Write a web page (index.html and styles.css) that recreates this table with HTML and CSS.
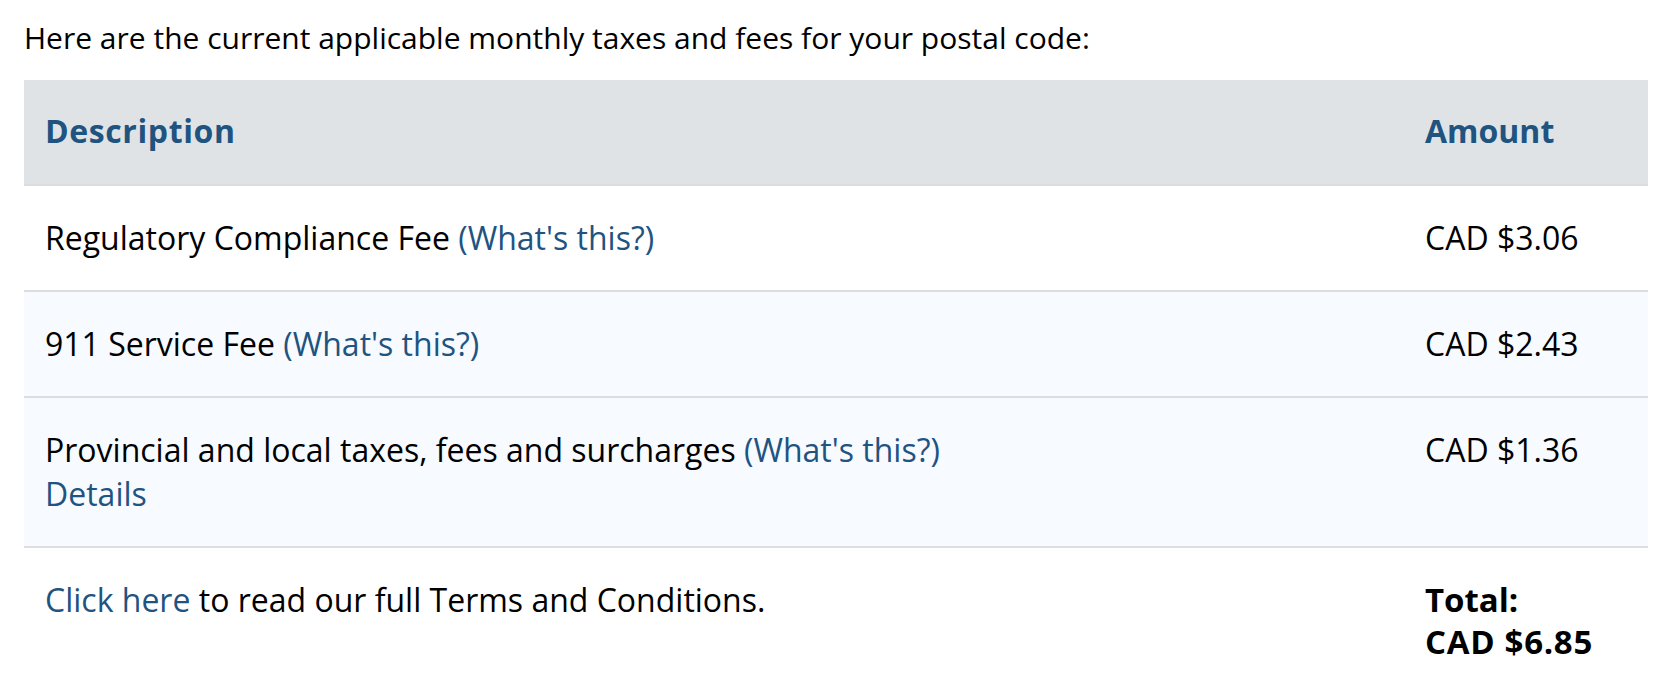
FILE: index.html
```html
<!DOCTYPE html>
<html lang="en">
<head>
<meta charset="utf-8">
<title>Taxes and fees</title>
<link rel="stylesheet" href="styles.css">
</head>
<body>
<div class="page">
  <p class="intro">Here are the current applicable monthly taxes and fees for your postal code:</p>
  <table class="fees">
    <thead>
      <tr>
        <th class="desc">Description</th>
        <th class="amt">Amount</th>
      </tr>
    </thead>
    <tbody>
      <tr>
        <td class="desc">Regulatory Compliance Fee <a href="#">(What's this?)</a></td>
        <td class="amt">CAD $3.06</td>
      </tr>
      <tr class="alt">
        <td class="desc">911 Service Fee <a href="#">(What's this?)</a></td>
        <td class="amt">CAD $2.43</td>
      </tr>
      <tr class="alt">
        <td class="desc">Provincial and local taxes, fees and surcharges <a href="#">(What's this?)</a><br><a href="#">Details</a></td>
        <td class="amt">CAD $1.36</td>
      </tr>
      <tr class="foot">
        <td class="desc"><a href="#">Click here</a> to read our full Terms and Conditions.</td>
        <td class="amt total">Total:<br><span class="total-value">CAD $6.85</span></td>
      </tr>
    </tbody>
  </table>
</div>
</body>
</html>
```

FILE: styles.css
```css
html, body {
  margin: 0;
  padding: 0;
  background: #ffffff;
}

body {
  font-family: "Open Sans", "Liberation Sans", sans-serif;
  color: #000000;
}

.page {
  padding: 17px 22px 0 24px;
}

.intro {
  margin: 0 0 21px 0;
  font-size: 30px;
  line-height: 42px;
}

a {
  color: #1f5481;
  text-decoration: none;
}

.fees {
  width: 100%;
  border-collapse: collapse;
  font-size: 32px;
  line-height: 44px;
}

.fees th {
  background: #e0e3e6;
  color: #1f5481;
  font-weight: 700;
  text-align: left;
  padding: 29px 21px 31px 21px;
  border-bottom: 2px solid #dcdde0;
}

.fees th.desc {
  letter-spacing: 0.6px;
}

.fees td {
  text-align: left;
  vertical-align: top;
  padding: 30px 21px 30px 21px;
  border-bottom: 2px solid #dcdde0;
}

.fees .amt {
  width: 202px;
}

.fees tr.alt td {
  background: #f7faff;
}

.fees tr.foot td {
  border-bottom: none;
}

.fees .total {
  font-weight: 700;
  font-size: 33px;
  line-height: 42px;
  padding-top: 31px;
}

.total-value {
  letter-spacing: 0.7px;
}
```
